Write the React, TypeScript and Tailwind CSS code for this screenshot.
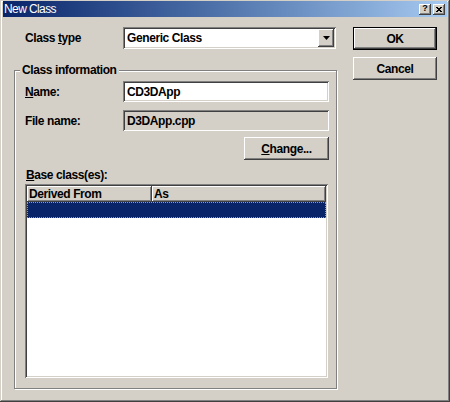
import React from "react";

const raised =
  "shadow-[inset_-1px_-1px_#404040,inset_1px_1px_#fff,inset_-2px_-2px_#808080]";
const sunken =
  "shadow-[inset_1px_1px_#808080,inset_-1px_-1px_#fff,inset_2px_2px_#404040,inset_-2px_-2px_#d4d0c8]";

const Label: React.FC<{ children: React.ReactNode; className?: string }> = ({ children, className }) => (
  <span className={`font-bold text-[12px] tracking-[-0.4px] text-black leading-[14px] ${className ?? ""}`}>
    {children}
  </span>
);

const Button: React.FC<{ children: React.ReactNode; primary?: boolean; className?: string }> = ({
  children,
  primary,
  className,
}) => (
  <div className={`${primary ? "border border-black" : ""} w-[84px] h-[23px] ${className ?? ""}`}>
    <div className={`w-full h-full bg-[#d4d0c8] ${raised} flex items-center justify-center`}>
      <Label>{children}</Label>
    </div>
  </div>
);

const CaptionButton: React.FC<{ children: React.ReactNode }> = ({ children }) => (
  <div className={`w-[12px] h-[11px] bg-[#d4d0c8] ${raised} flex items-center justify-center`}>{children}</div>
);

export default function App() {
  return (
    <div className="w-[450px] h-[402px] bg-[#d4d0c8] flex flex-col pt-[1px] px-[3px] pb-[3px] shadow-[inset_-1px_-1px_#404040,inset_1px_1px_#d4d0c8,inset_-2px_-2px_#808080,inset_2px_2px_#fff] font-['Liberation_Sans',Arial,sans-serif] select-none">
      {/* title bar */}
      <div className="h-[16px] flex items-center justify-between bg-linear-to-r from-[#0a246a] to-[#a6caf0] pl-[1px] pr-[2px]">
        <span className="text-white text-[12px] tracking-[-0.6px] leading-[14px]">New Class</span>
        <div className="flex gap-[2px]">
          <CaptionButton>
            <span className="text-[9px] font-bold leading-none text-black -mt-[1px]">?</span>
          </CaptionButton>
          <CaptionButton>
            <svg width="6" height="5" viewBox="0 0 6 5">
              <path d="M0 0h2v1h2V0h2v1H5v1H4v1h1v1h1v1H4V4H2v1H0V4h1V3h1V2H1V1H0z" fill="#000" />
            </svg>
          </CaptionButton>
        </div>
      </div>

      {/* body */}
      <div className="flex-1 flex pl-[11px] pt-[10px]">
        <div className="w-[324px] flex flex-col">
          <div className="flex items-center h-[22px]">
            <Label className="w-[109px] pl-[11px]">
              Class <span className="underline">t</span>ype
            </Label>
            <div className={`w-[213px] h-[22px] bg-white ${sunken} flex items-center p-[2px]`}>
              <Label className="flex-1 pl-[2px]">Generic Class</Label>
              <div className={`w-[16px] h-full bg-[#d4d0c8] ${raised} flex items-center justify-center`}>
                <svg width="7" height="4" viewBox="0 0 7 4">
                  <path d="M0 0h7L3.5 4z" fill="#000" />
                </svg>
              </div>
            </div>
          </div>

          {/* group box */}
          <div className="relative mt-[21px] w-[323px] h-[319px] border border-[#808080] shadow-[1px_1px_#fff,inset_1px_1px_#fff] pl-[10px] pt-[10px] flex flex-col">
            <Label className="absolute -top-[8px] left-[5px] px-[2px] bg-[#d4d0c8]">Class information</Label>

            <div className="flex items-center h-[21px]">
              <Label className="w-[98px]">
                <span className="underline">N</span>ame:
              </Label>
              <div className={`w-[206px] h-full bg-white ${sunken} flex items-center pl-[4px]`}>
                <Label>CD3DApp</Label>
              </div>
            </div>

            <div className="flex items-center h-[21px] mt-[8px]">
              <Label className="w-[98px]">File name:</Label>
              <div className={`w-[206px] h-full bg-[#d4d0c8] ${sunken} flex items-center pl-[4px]`}>
                <Label>D3DApp.cpp</Label>
              </div>
            </div>

            <Button className="ml-[219px] mt-[6px] w-[85px]">
              <span className="underline">C</span>hange...
            </Button>

            <Label className="mt-[8px] pl-[1px]">
              <span className="underline">B</span>ase class(es):
            </Label>

            <div className={`mt-[2px] w-[303px] h-[194px] bg-white ${sunken} p-[2px] flex flex-col`}>
              <div className="flex h-[16px] bg-[#d4d0c8]">
                <div className={`w-[125px] h-full ${raised} flex items-center pl-[2px]`}>
                  <Label>Derived From</Label>
                </div>
                <div className={`flex-1 h-full ${raised} flex items-center pl-[2px]`}>
                  <Label>As</Label>
                </div>
              </div>
              <div className="h-[16px] bg-[#0a246a] outline-1 outline-dotted outline-[#8e97b8] -outline-offset-1" />
            </div>
          </div>
        </div>

        <div className="ml-[15px] flex flex-col">
          <Button primary>OK</Button>
          <Button className="mt-[7px]">Cancel</Button>
        </div>
      </div>
    </div>
  );
}
